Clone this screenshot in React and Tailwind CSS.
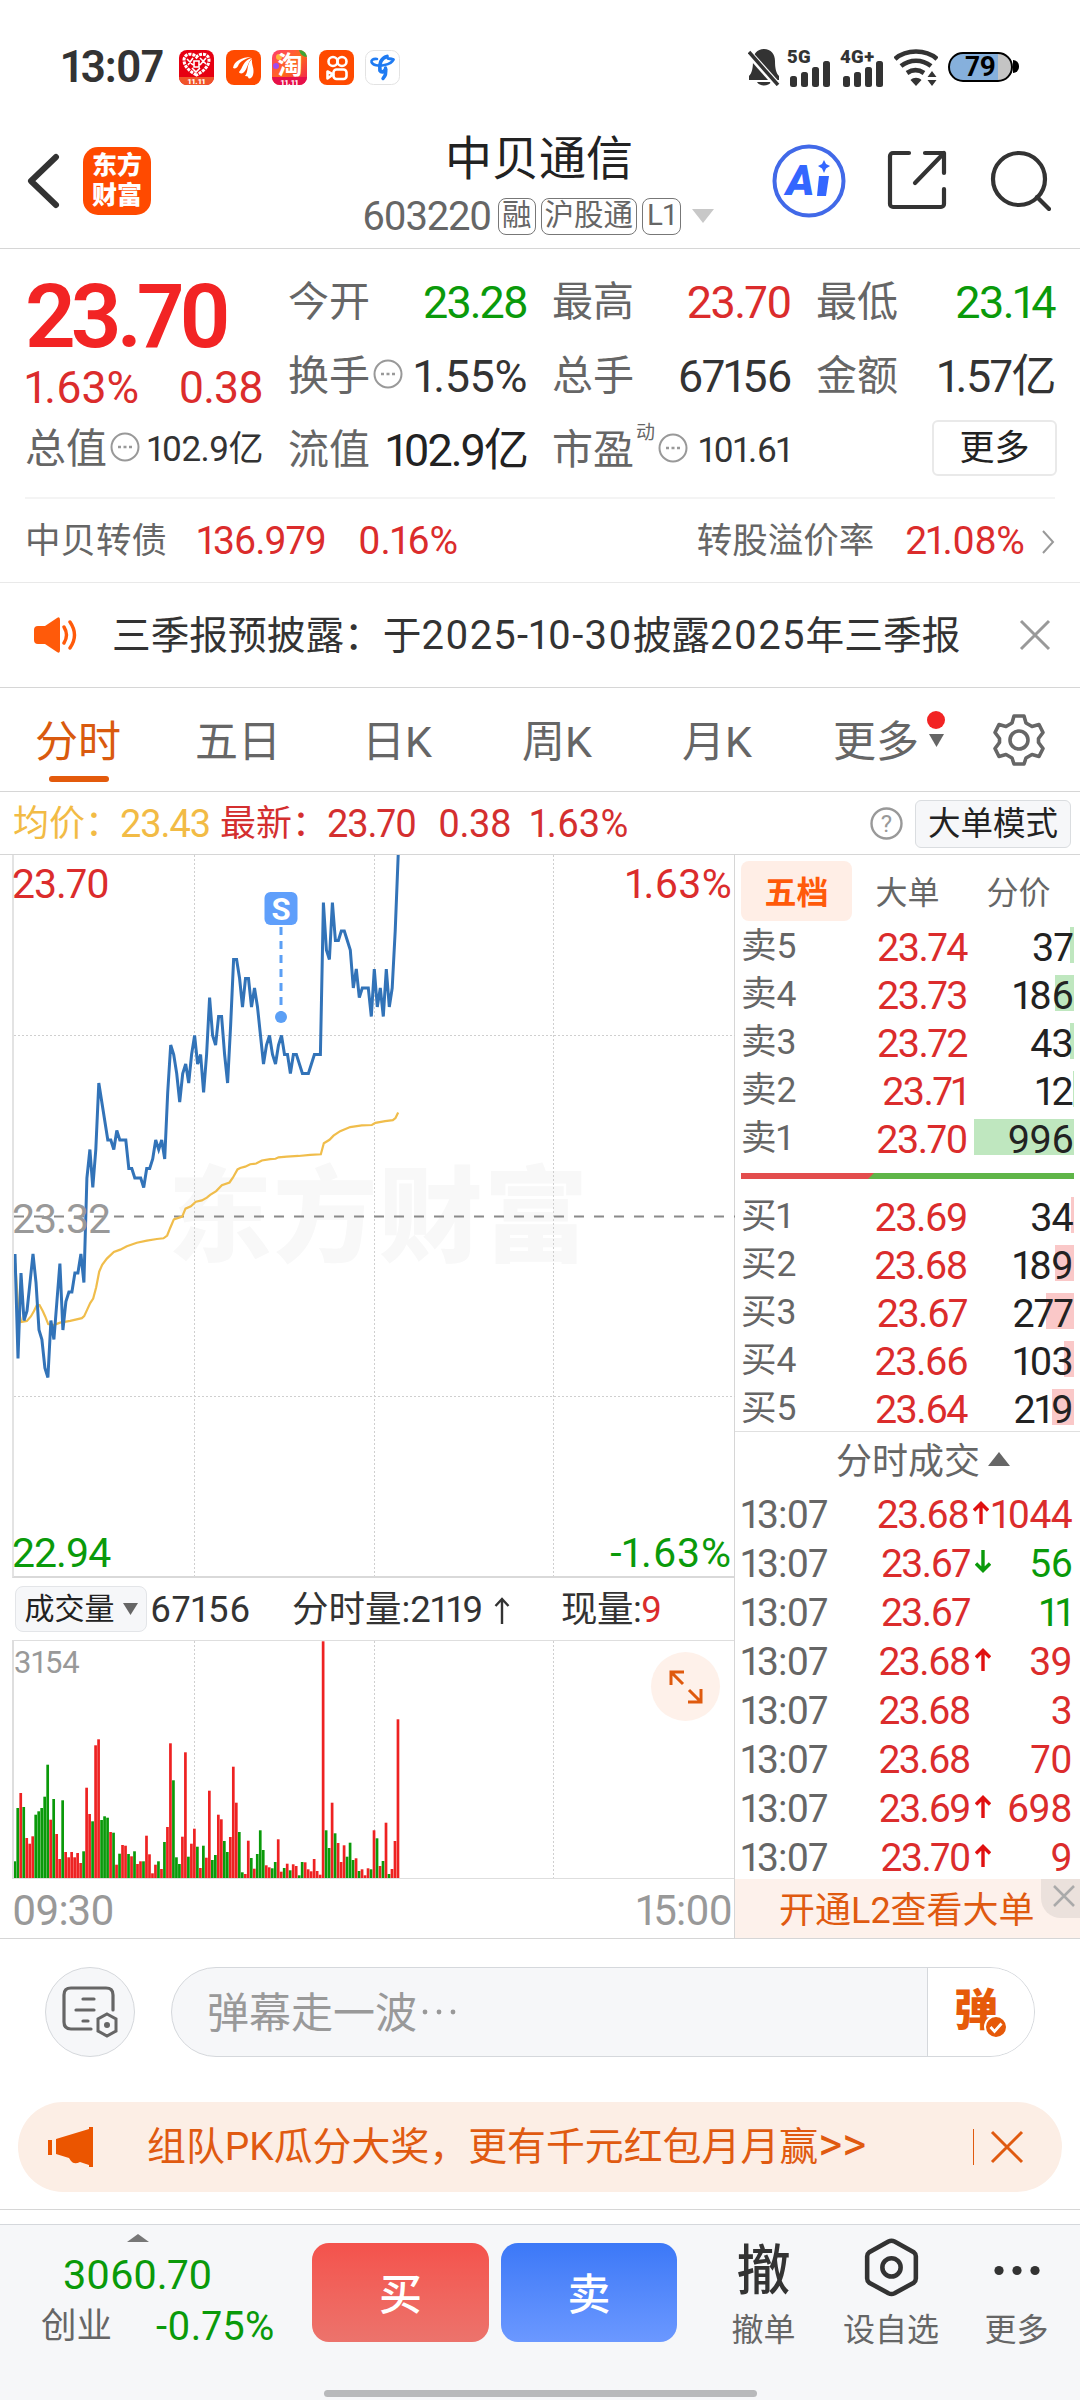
import clsx from 'clsx'

const PREV_CLOSE_STEP = 38
const MINUTE = 2.994

// minute prices, in cents below 23.70
const PRICES = [
  42, 53, 44, 49, 48, 45, 42, 45, 50, 51, 54, 55, 49, 51, 47, 43, 50, 47, 46, 46, 44, 44, 42, 45, 34,
  31, 35, 31, 24, 26, 28, 30, 30, 31, 29, 30, 30, 30, 33, 33, 34, 34, 34, 35, 33, 33, 32, 30, 31, 30,
  32, 25, 20, 21, 23, 26, 23, 22, 24, 21, 19, 22, 21, 25, 21, 15, 19, 20, 17, 17, 21, 24, 18, 11, 11,
  13, 16, 13, 13, 16, 14, 16, 19, 22, 20, 19, 21, 22, 20, 19, 21, 21, 23, 21, 21, 22, 23, 23, 23, 22,
  21, 21, 21, 5, 10, 11, 5, 9, 9, 8, 8, 9, 10, 14, 12, 15, 14, 14, 14, 17, 12, 16, 14, 17, 12, 16, 14,
  8, 0,
]

const AVERAGE =
  '45,1200 54,1330 63,1371 80,1368 92,1355 101,1340 110,1322 118,1322 128,1340 135,1355 144,1377 160,1380 180,1373 210,1368 245,1360 252,1354 262,1333 270,1316 279,1303 288,1270 297,1225 306,1205 320,1187 341,1168 360,1161 380,1151 410,1141 440,1135 470,1130 490,1128 501,1120 510,1098 521,1073 546,1065 556,1042 572,1035 587,1022 605,1018 620,1010 630,1002 648,991 665,974 688,966 698,952 712,928 720,924 735,920 750,913 768,911 785,902 810,898 826,897 835,893 860,891 895,889 930,886 962,884 971,852 988,842 1000,830 1020,817 1050,805 1085,800 1115,799 1126,793 1155,788 1178,785 1186,779 1194,763'

// direction and height for every minute; g = down, r = up
const VOLUMES = `g50 g210 r255 g213 r120 r103 r125 g190 g200 g210 g244 g340 r175 g237 r132 r57 g233 r78 r62 r78
  r62 r75 r45 g80 r271 r192 g170 r398 r416 g174 g185 g181 r138 g136 r40 g73 r99 r97 g72 r65 g80 r42 r50
  g50 r127 r71 r14 r40 g50 r27 g108 r153 r404 g293 g62 g42 r124 r377 g64 r103 r148 g94 r30 g97 r61 r262
  g54 g69 r190 r176 g111 g78 r123 r334 r226 g138 g17 r12 r112 g60 r28 g72 g143 g84 r38 r32 g29 g48 r116
  r19 g30 r43 g23 r41 r36 g8 g48 r47 r26 r20 r57 r21 r10 r710 g143 g90 r226 g134 r105 r48 r98 g64 g106
  g54 r59 g21 r26 r8 r29 g26 r143 g119 r36 g51 r166 g12 r27 r111 r476`
  .split(/\s+/)
  .map((s) => ({ up: s[0] === 'r', h: Number(s.slice(1)) / 3 }))

const ASKS = [
  ['卖5', '23.74', 37],
  ['卖4', '23.73', 186],
  ['卖3', '23.72', 43],
  ['卖2', '23.71', 12],
  ['卖1', '23.70', 996],
]
const BIDS = [
  ['买1', '23.69', 34],
  ['买2', '23.68', 189],
  ['买3', '23.67', 277],
  ['买4', '23.66', 103],
  ['买5', '23.64', 219],
]

const TRADES = [
  ['23.68', 'up', 1044, 'red'],
  ['23.67', 'down', 56, 'green'],
  ['23.67', '', 11, 'green'],
  ['23.68', 'up', 39, 'red'],
  ['23.68', '', 3, 'red'],
  ['23.68', '', 70, 'red'],
  ['23.69', 'up', 698, 'red'],
  ['23.70', 'up', 9, 'red'],
]

function Signal() {
  return (
    <svg width="40" height="26" viewBox="0 0 40 26" fill="#333">
      <rect x="0" y="15" width="7" height="11" rx="2.5" />
      <rect x="11" y="11" width="7" height="15" rx="2.5" />
      <rect x="22" y="6" width="7" height="20" rx="2.5" />
      <rect x="33" y="0" width="7" height="26" rx="2.5" />
    </svg>
  )
}

function StatusBar() {
  return (
    <div className="flex h-[112px] items-center pl-[61px] pr-[61px] pt-[22px]">
      <span className="w-[118px] text-[44px] font-semibold leading-none tracking-[-1px] text-[#333]">13:07</span>
      <div className="flex gap-[11.6px]">
        <svg width="35" height="35" viewBox="0 0 35 35">
          <rect width="35" height="35" rx="8" fill="#e60012" />
          <path d="M0 27h35a8 8 0 0 1-8 8H8a8 8 0 0 1-8-8z" fill="#f0542a" />
          <path d="M17.500 25C10 21 5 16 5 10c0-6 8-8 12.500-3C22 2 30 4 30 10c0 6-5 11-12.500 15z" fill="none" stroke="#fff" strokeWidth="3" strokeDasharray="3 1" />
          <path d="M8 9l6 6M14 8l-5 7M21 8l6 6M27 8l-6 7M13 18l4 4 4-4M15 11h5v6h-5z" fill="none" stroke="#fff" strokeWidth="1.600" />
          <text x="17.500" y="34" fontSize="8" fontWeight="800" fill="#fff" textAnchor="middle">11.11</text>
        </svg>
        <svg width="35" height="35" viewBox="0 0 35 35" fill="#fff">
          <rect width="35" height="35" rx="8" fill="#ff4a00" />
          <path d="M7 18c1-7 9-11 18-11-6 2-11 4-13 9-1 2-3 3-5 2z" />
          <path d="M13 22c4-4 4-12 13-14-5 5-4 11-9 15-2 1-4 0-4-1z" />
          <path d="M19 26c4-5 1-12 7-17-1 5 3 10 1 16-1 3-3 4-5 3 1-1 0-2-3-2z" />
        </svg>
        <svg width="35" height="35" viewBox="0 0 35 35">
          <defs>
            <linearGradient id="tb" x1="0" y1="0" x2="1" y2="1">
              <stop offset="0" stopColor="#ff3c6e" />
              <stop offset="0.500" stopColor="#ff6a1a" />
              <stop offset="1" stopColor="#f01a5a" />
            </linearGradient>
          </defs>
          <rect width="35" height="35" rx="8" fill="url(#tb)" />
          <path d="M27 0a8 8 0 0 1 8 7c-4 0-7-3-8-7z" fill="#3fa535" />
          <circle cx="7" cy="7" r="3" fill="#ffb53a" />
          <circle cx="4" cy="16" r="3" fill="#a04af0" />
          <path d="M0 27h35a8 8 0 0 1-8 8H8a8 8 0 0 1-8-8z" fill="#e6104a" />
          <text x="18" y="24" fontSize="25" fontWeight="700" fill="#fff" textAnchor="middle">淘</text>
          <text x="17.500" y="34.500" fontSize="8" fontWeight="800" fill="#fff" textAnchor="middle">11.11</text>
        </svg>
        <svg width="35" height="35" viewBox="0 0 35 35" fill="none" stroke="#fff" strokeWidth="2.600">
          <rect width="35" height="35" rx="8" fill="#ff4a00" stroke="none" />
          <circle cx="14" cy="11.500" r="4.500" />
          <circle cx="23" cy="11.500" r="4.500" />
          <rect x="14.500" y="19.500" width="13" height="9.500" rx="3" />
          <path d="M14 24.500L8.500 21.500v7z" strokeLinejoin="round" />
        </svg>
        <svg width="35" height="35" viewBox="0 0 35 35" fill="none" stroke="#1f7bf2" strokeLinecap="round">
          <rect x="0.500" y="0.500" width="34" height="34" rx="8" fill="#fff" stroke="#e3e3e3" />
          <path d="M12 9C8 8.500 6 10 6.500 12c1 3 7 4.500 13 3 5-1 8-3 9-5.500" strokeWidth="2.600" />
          <path d="M28 9.500c-2-1-4-.500-5-1" strokeWidth="3" />
          <path d="M22 6.500C16 8 14 14 15 20.500c1.500 2.500 4 1.500 5.500-1" strokeWidth="3.800" />
          <path d="M20.500 18c1 5 0 8-2.500 10.500" strokeWidth="3.400" />
        </svg>
      </div>
      <div className="ml-auto flex items-end">
        <svg className="mr-[10px]" width="32" height="37" viewBox="0 0 32 37">
          <path d="M16 0c7 0 11 5 11 12 0 7 1 12 4 15v4H1v-4c3-3 4-8 4-15C5 5 9 0 16 0zM9 33h14c-2 4.500-12 4.500-14 0z" fill="#333" />
          <path d="M-1 2L31 38" stroke="#fff" strokeWidth="7" />
          <path d="M1 3l29 33" stroke="#333" strokeWidth="3.500" />
        </svg>
        <div className="relative mr-[13px] h-[36px] w-[40px] pt-[11px]">
          <span className="absolute -left-[3px] -top-[2px] text-[18.500px] font-black leading-none tracking-[0.400px] text-[#333]">5G</span>
          <Signal />
        </div>
        <div className="relative mr-[11px] h-[36px] w-[40px] pt-[11px]">
          <span className="absolute -left-[3px] -top-[2px] text-[18.500px] font-black leading-none tracking-[0.400px] text-[#333]">4G+</span>
          <Signal />
        </div>
        <svg className="mr-[10px]" width="44" height="37" viewBox="0 0 44 37" fill="none" stroke="#333" strokeWidth="4.600">
          <path d="M1 10C12 0 32 0 43 10M7 17c9-7 21-7 30 0M13 24c6-4 11-4 17 0" />
          <path d="M16.500 31c3-3 8-3 11 0L22 37zM38 22l4.500 6h-9zM38 37l4.500-6h-9z" fill="#333" stroke="none" />
        </svg>
        <div className="mb-1 flex items-center">
          <div className="flex h-[30px] w-[65px] items-center justify-center rounded-full border-2 border-black bg-linear-to-r from-[#86b0dc] from-78% to-[#c4c4c4] to-78% text-[28px] font-bold leading-none text-black">
            79
          </div>
          <div className="h-[13px] w-[6px] rounded-r-md bg-black" />
        </div>
      </div>
    </div>
  )
}

function Tag({ children }) {
  return (
    <span className="flex h-[37px] shrink-0 items-center whitespace-nowrap rounded-lg border border-[#777] px-[3px] text-[29.500px] leading-none text-[#666]">
      {children}
    </span>
  )
}

function Header() {
  return (
    <header className="flex h-[137px] items-center border-b border-[#d6d6d6] pl-[27px] pr-[29px]">
      <svg className="mt-[2px]" width="33" height="56" viewBox="0 0 33 56" fill="none" stroke="#333" strokeWidth="6" strokeLinecap="round" strokeLinejoin="round">
        <path d="M29 4L4 28l25 24" />
      </svg>
      <div className="ml-[23px] mt-[1px] flex h-[68px] w-[68px] flex-col items-center justify-center rounded-[15px] bg-[#ff4a00] text-[25px] font-black leading-[30px] text-white">
        <span>东方</span>
        <span>财富</span>
      </div>
      <div className="ml-[211px] w-[353px] self-start pt-[17px]">
        <h1 className="pl-[83px] text-[47px] leading-[60px] text-[#222]">中贝通信</h1>
        <div className="flex h-[54px] items-center gap-[5px]">
          <span className="mt-[1px] w-[131px] shrink-0 text-[40px] leading-none tracking-[-1.300px] text-[#666]">603220</span>
          <Tag>融</Tag>
          <Tag>沪股通</Tag>
          <Tag>
            <span className="px-px">L1</span>
          </Tag>
          <svg className="ml-[6px] shrink-0" width="22" height="14" viewBox="0 0 22 14">
            <path d="M0 0h22L11 14z" fill="#c8c8c8" />
          </svg>
        </div>
      </div>
      <svg className="ml-auto mt-[2px] shrink-0" width="74" height="74" viewBox="0 0 74 74">
        <circle cx="37" cy="37" r="34.500" fill="#fff" stroke="#4169e8" strokeWidth="4" />
        <text x="14" y="51" fontSize="43" fontWeight="900" fontStyle="italic" fill="#3366ff">A</text>
        <path d="M47 32h10l-3 20h-9z" fill="#3366ff" />
        <path d="M52 16l2 4 4 2-4 2.500-2 4.500-2-4.500-4-2.500 4-2z" fill="#3366ff" />
      </svg>
      <svg className="ml-[41px]" width="60" height="60" viewBox="0 0 60 60" fill="none" stroke="#333" strokeWidth="4.200" strokeLinecap="round" strokeLinejoin="round">
        <path d="M22 3H6a3 3 0 0 0-3 3v48a3 3 0 0 0 3 3h48a3 3 0 0 0 3-3V39M38 3h19v20M57 3L28 33" />
      </svg>
      <svg className="ml-[43px]" width="61" height="61" viewBox="0 0 61 61" fill="none" stroke="#333" strokeWidth="4.200" strokeLinecap="round">
        <circle cx="29" cy="29" r="26" />
        <path d="M47 47l12 12" />
      </svg>
    </header>
  )
}

function MoreDots() {
  return (
    <svg width="30" height="30" viewBox="0 0 30 30" fill="none" stroke="#999" strokeWidth="2">
      <circle cx="15" cy="15" r="13.500" />
      <path d="M8 15h3M13.500 15h3M19 15h3" strokeWidth="2.600" />
    </svg>
  )
}

function Stat({ label, info, sup, value, className }) {
  return (
    <div className="flex items-center justify-between leading-none">
      <span className="flex items-center text-[41px] text-[#666]">
        {label}
        {sup && <span className="-mt-9 ml-[2px] text-[19px]">{sup}</span>}
        {info && (
          <span className="-mt-[5px] ml-[3px] flex">
            <MoreDots />
          </span>
        )}
      </span>
      <span className={clsx('whitespace-nowrap', className)}>{value}</span>
    </div>
  )
}

const VALUE = 'text-[45px] tracking-[-1.500px]'

function Quote() {
  return (
    <section className="px-[25px]">
      <div className="flex h-[250px] justify-between border-b-2 border-[#f4f4f4] pt-[16px]">
        <div className="flex w-[238px] flex-col">
          <div className="mt-[14px] h-[75px] text-[89px] font-semibold leading-[75px] tracking-[-5px] text-[#f22424]">23.70</div>
          <div className="mt-[10px] flex h-[48px] items-center justify-between text-[44.500px] leading-none text-[#db2c2c]">
            <span>1.63%</span>
            <span className="tracking-[-1px]">0.38</span>
          </div>
          <div className="mt-[16px] h-[46px] pt-px">
            <Stat label="总值" info value="102.9亿" className="text-[35px] tracking-[-0.600px] text-[#333]" />
          </div>
        </div>
        <div className="grid h-[222px] w-[239px] grid-rows-3 items-center">
          <Stat label="今开" value="23.28" className="text-[45px] tracking-[-2px] text-[#0a9a0a]" />
          <Stat label="换手" info value="1.55%" className="text-[45px] tracking-[-0.400px] text-[#333]" />
          <Stat label="流值" value="102.9亿" className="text-[45px] tracking-[-2.100px] text-[#222]" />
        </div>
        <div className="grid h-[222px] w-[239px] grid-rows-3 items-center">
          <Stat label="最高" value="23.70" className={clsx(VALUE, 'text-[#db2c2c]')} />
          <Stat label="总手" value="67156" className="text-[45px] tracking-[-1.200px] text-[#333]" />
          <Stat label="市盈" sup="动" info value="101.61" className="text-[35px] tracking-[-0.500px] text-[#333]" />
        </div>
        <div className="grid h-[222px] w-[239px] grid-rows-3 items-center">
          <Stat label="最低" value="23.14" className={clsx(VALUE, 'text-[#0a9a0a]')} />
          <Stat label="金额" value="1.57亿" className={clsx(VALUE, 'text-[#333]')} />
          <button className="-mr-0.5 -mt-[4px] h-[56px] w-[125px] justify-self-end rounded-md border-2 border-[#e9e9e9] text-[35px] leading-none text-[#222]">
            更多
          </button>
        </div>
      </div>
      <div className="flex h-[83px] items-center pt-[2px] text-[39px] leading-none text-[#db2c2c]">
        <span className="w-[172px] text-[35.500px] text-[#666]">中贝转债</span>
        <span className="w-[161px] tracking-[-1px]">136.979</span>
        <span className="tracking-[-0.200px]">0.16%</span>
        <span className="ml-auto mr-[31px] text-[35.500px] text-[#666]">转股溢价率</span>
        <span className="mr-[18px] tracking-[-0.700px]">21.08%</span>
        <svg width="13" height="24" viewBox="0 0 13 24" fill="none" stroke="#999" strokeWidth="2">
          <path d="M1 1l10 11L1 23" />
        </svg>
      </div>
    </section>
  )
}

function Notice() {
  return (
    <section className="flex h-[106px] items-center border-y border-t-[#e9e9e9] border-b-[#d6d6d6] pl-[33px] pr-[29px]">
      <svg width="46" height="36" viewBox="0 0 46 36" fill="#ff5a0a">
        <path d="M5 9h7L24 1q3-2 3 2v30q0 4-3 2L12 27H5q-4 0-4-4V13q0-4 4-4z" />
        <path d="M31 10q5 8 0 16M37 5q9 13 0 26" fill="none" stroke="#ff5a0a" strokeWidth="3.400" strokeLinecap="round" />
      </svg>
      <span className="ml-[33px] whitespace-nowrap pt-px text-[38.700px] leading-none text-[#333]">
        三季报预披露：于<span className="text-[40px] tracking-[1.200px]">2025-10-30</span>披露
        <span className="text-[40px] tracking-[1.200px]">2025</span>年三季报
      </span>
      <svg className="ml-auto" width="32" height="32" viewBox="0 0 32 32" stroke="#999" strokeWidth="3">
        <path d="M2 2l28 28M30 2L2 30" />
      </svg>
    </section>
  )
}

function Tabs() {
  return (
    <nav className="flex h-[104px] items-center border-b border-[#d6d6d6] pt-[5px] text-[43px] leading-none text-[#666]">
      <div className="relative ml-[35px] w-[160px] text-[#d95a0e]">
        分时
        <span className="absolute -bottom-[18px] left-[14px] h-[6px] w-[60px] rounded-[3px] bg-[#e35a0c]" />
      </div>
      <span className="w-[167px]">五日</span>
      <span className="w-[160px]">日K</span>
      <span className="w-[160px]">周K</span>
      <span className="w-[151px]">月K</span>
      <span className="w-[86px]">更多</span>
      <div className="ml-[8px] flex w-[18px] flex-col items-center gap-[5px] pb-[27px]">
        <span className="h-[18px] w-[18px] rounded-full bg-[#f22424]" />
        <svg width="15" height="13" viewBox="0 0 15 13">
          <path d="M0 0h15L7.500 13z" fill="#666" />
        </svg>
      </div>
      <svg className="mb-[5px] ml-[48px]" width="52" height="52" viewBox="0 0 52 52" fill="none" stroke="#666" strokeWidth="3.600" strokeLinejoin="round">
        <path d="M21 2h10l2 7 6 3.500 7-2 4 8-4.500 6v4l4.500 6-4 8-7-2-6 3.500-2 6H21l-2-6-6-3.500-7 2-4-8 4.500-6v-4L2 18.500l4-8 7 2L19 9z" />
        <circle cx="26" cy="26" r="9" />
      </svg>
    </nav>
  )
}

function PriceBar() {
  return (
    <div className="flex h-[63px] items-center whitespace-nowrap border-b border-[#d6d6d6] pl-[13px] pr-[9px] pt-px text-[38px] leading-none text-[#d42f2f]">
      <span className="w-[107px] text-[36px] text-[#f2bb45]">均价：</span>
      <span className="w-[100px] tracking-[-1.100px] text-[#f2bb45]">23.43</span>
      <span className="w-[107px] text-[36px]">最新：</span>
      <span className="w-[111px] tracking-[-1.100px]">23.70</span>
      <span className="w-[92px] tracking-[-0.600px]">0.38</span>
      <span className="tracking-[0.200px]">1.63%</span>
      <svg className="ml-auto" width="33" height="33" viewBox="0 0 33 33">
        <circle cx="16.500" cy="16.500" r="15" fill="none" stroke="#999" strokeWidth="2.400" />
        <text x="16.500" y="25" fontSize="24" fill="#999" textAnchor="middle">?</text>
      </svg>
      <button className="ml-[12px] flex h-[48px] w-[156px] items-center justify-center rounded-md border border-[#dadde0] bg-[#f6f7f9] pt-[2px] text-[32.500px] text-[#222]">
        大单模式
      </button>
    </div>
  )
}

function Grid({ height, rows = [] }) {
  return (
    <g stroke="#cfcfcf" strokeWidth="1" strokeDasharray="2 2">
      {[180.5, 360.5, 539.5].map((x) => (
        <path key={x} d={`M${x} 0V${height}`} />
      ))}
      {rows.map((y) => (
        <path key={y} d={`M0 ${y}H723`} />
      ))}
    </g>
  )
}

function PriceChart() {
  const line = PRICES.map((p, i) => `${(1 + i * MINUTE).toFixed(1)},${(p * 9.5).toFixed(1)}`).join(' ')
  const mid = PREV_CLOSE_STEP * 9.5 + 0.5
  return (
    <div className="relative h-[723px] border-b-2 border-l-2 border-b-[#d9d9d9] border-l-[#e3e3e3]">
      <svg className="block" width="721" height="721" viewBox="0 0 721 721">
        <text x="154" y="399" fontSize="104" fontWeight="900" fill="#f8f8f8" textLength="420">
          东方财富
        </text>
        <Grid height={721} rows={[180.5, 541.5]} />
        <path d={`M0 ${mid}H723`} stroke="#8a8a8a" strokeWidth="2" strokeDasharray="10 10" />
        <polyline
          points={AVERAGE}
          fill="none"
          stroke="#f0bd4b"
          strokeWidth="2.200"
          vectorEffect="non-scaling-stroke"
          transform="translate(-13.800 -5.200) scale(0.3333 0.3444)"
        />
        <polyline points={line} fill="none" stroke="#3273b8" strokeWidth="3" />
        <path d="M267 72v88" stroke="#5b9ff5" strokeWidth="3" strokeDasharray="8 6" />
        <circle cx="267" cy="162" r="6" fill="#5b9ff5" />
        <rect x="250.500" y="37" width="33" height="33" rx="6" fill="#5f9ffb" />
        <text x="267" y="64.500" fontSize="31" fontWeight="700" fill="#fff" textAnchor="middle">S</text>
      </svg>
      <div className="absolute inset-0 -left-[2px] flex flex-col justify-between pb-[2px] pr-[2px] pt-[9px] text-[41px] leading-none tracking-[-1px]">
        <div className="flex justify-between text-[#db2c2c]">
          <span>23.70</span>
          <span className="tracking-[0.300px]">1.63%</span>
        </div>
        <span className="text-[#999]">23.32</span>
        <div className="flex justify-between text-[#0a9a0a]">
          <span>22.94</span>
          <span className="tracking-[0.900px]">-1.63%</span>
        </div>
      </div>
    </div>
  )
}

function VolumeChart() {
  return (
    <>
      <div className="flex h-[62px] items-center pl-[3px] pt-[2px] text-[36.500px] leading-none text-[#333]">
        <button className="-mt-[2px] flex h-[46px] w-[132px] items-center justify-center gap-[8px] rounded-lg border border-[#e3e5e8] bg-[#f6f7f9] text-[30px] text-[#222]">
          成交量
          <svg width="15" height="12" viewBox="0 0 15 12">
            <path d="M0 0h15L7.500 12z" fill="#666" />
          </svg>
        </button>
        <span className="ml-[3px] w-[142px] tracking-[0.800px]">67156</span>
        <span className="w-[198px] whitespace-nowrap">分时量:2119</span>
        <svg className="ml-[4px] mr-[51px]" width="16" height="27" viewBox="0 0 16 27" fill="none" stroke="#333" strokeWidth="2.400">
          <path d="M8 27V2M1.500 9L8 2l6.500 7" />
        </svg>
        <span className="tracking-[-0.500px]">现量:</span>
        <span className="text-[#db2c2c]">9</span>
      </div>
      <div className="relative h-[239px] border-y border-l-2 border-[#dedede]">
        <svg className="block" width="721" height="237" viewBox="0 0 721 237">
          <Grid height={237} />
          {VOLUMES.map((v, i) => (
            <rect
              key={i}
              x={(-0.6 + i * MINUTE).toFixed(2)}
              y={(237 - v.h).toFixed(1)}
              width="2.700"
              height={v.h.toFixed(1)}
              fill={v.up ? '#ee2222' : '#0a9a0a'}
            />
          ))}
        </svg>
        <span className="absolute left-0 top-[6px] text-[31px] leading-none text-[#999]">3154</span>
        <div className="absolute right-[14px] top-[11px] flex h-[69px] w-[69px] items-center justify-center rounded-full bg-[#fef1ea]">
          <svg width="34" height="34" viewBox="0 0 34 34" fill="none" stroke="#df5a0e" strokeWidth="3">
            <path d="M2 15V2h13M2 2l12 12M32 19v13H19M32 32L20 20" />
          </svg>
        </div>
      </div>
      <div className="flex h-[59px] items-center justify-between pr-[2px] pt-[4px] text-[42px] leading-none tracking-[-1px] text-[#999]">
        <span>09:30</span>
        <span>15:00</span>
      </div>
    </>
  )
}

function Level({ label, price, volume, side }) {
  return (
    <div className="relative flex h-[48px] items-center leading-none">
      <span
        className={clsx('absolute right-0 top-[4px] h-[36px]', side === 'ask' ? 'bg-[#bfe7bf]' : 'bg-[#fac8c8]')}
        style={{ width: Math.max(1, Math.round(volume / 9.96)) }}
      />
      <span className="relative w-[60px] whitespace-nowrap text-[35.500px] text-[#666]">{label}</span>
      <span className="relative w-[166px] pt-px text-right text-[39.500px] tracking-[-1.500px] text-[#db2c2c]">{price}</span>
      <span className="relative ml-auto pt-px pr-px text-right text-[39.500px] tracking-[-0.800px] text-[#222]">{volume}</span>
    </div>
  )
}

function TradeArrow({ dir }) {
  return (
    <svg
      className={clsx('mb-[5px] ml-[5px] mr-[2px] shrink-0', dir === 'down' && 'rotate-180')}
      width="16"
      height="23"
      viewBox="0 0 16 23"
      fill="none"
      stroke={dir === 'down' ? '#0a9a0a' : '#e01010'}
      strokeWidth="3.400"
    >
      {dir && <path d="M8 23V3M1 9.500L8 2.500l7 7" />}
    </svg>
  )
}

function OrderBook() {
  return (
    <aside className="flex h-[1083px] w-[346px] flex-col border-l border-[#d6d6d6]">
      <div className="flex h-[68px] shrink-0 pl-[6px] pt-[6px] text-[32px] leading-none text-[#666]">
        <span className="flex h-[60px] w-[111px] items-center justify-center rounded-lg bg-[#ffeee6] pt-[3px] font-bold text-[#ff5a0a]">五档</span>
        <span className="flex h-[60px] w-[111px] items-center justify-center pt-[3px]">大单</span>
        <span className="flex h-[60px] w-[111px] items-center justify-center pt-[3px]">分价</span>
      </div>
      <div className="shrink-0 pl-[6px] pr-[6px]">
        {ASKS.map(([label, price, volume]) => (
          <Level key={label} label={label} price={price} volume={volume} side="ask" />
        ))}
        <svg className="mb-[14px] mt-[10px] block" width="333" height="6" viewBox="0 0 333 6">
          <path d="M0 0h333v6H0z" fill="#5fb548" />
          <path d="M0 0h133l-6 6H0z" fill="#e34d4d" />
        </svg>
        {BIDS.map(([label, price, volume]) => (
          <Level key={label} label={label} price={price} volume={volume} side="bid" />
        ))}
      </div>
      <div className="-mt-[2px] flex h-[58px] shrink-0 items-center border-t border-[#e0e0e0] pl-[101px] pt-[2px] text-[36px] leading-none text-[#666]">
        分时成交
        <svg className="mb-[6px] ml-[8px]" width="22" height="14" viewBox="0 0 22 14">
          <path d="M0 14h22L11 0z" fill="#666" />
        </svg>
      </div>
      <div className="shrink-0 pl-[6px] pr-[8px]">
        {TRADES.map(([price, dir, volume, color], i) => (
          <div key={i} className="flex h-[49px] items-center pt-[3px] text-[39px] leading-none tracking-[-1.500px] text-[#db2c2c]">
            <span className="w-[110px] tracking-[-0.900px] text-[#666]">13:07</span>
            <span className="w-[119px] text-right">{price}</span>
            <TradeArrow dir={dir} />
            <span className={clsx('flex-1 text-right tracking-[-0.700px]', color === 'green' && 'text-[#0a9a0a]')}>{volume}</span>
          </div>
        ))}
      </div>
      <div className="relative -mt-[2px] flex h-[59px] shrink-0 items-center bg-[#fdf1eb] pl-[44px] pt-[4px] text-[36px] leading-none text-[#e05a10]">
        开通L2查看大单
        <div className="absolute right-0 top-0 flex h-[39px] w-[39px] items-center justify-center rounded-bl-[20px] bg-[#ebe1dc] pb-[6px] pl-[6px]">
          <svg width="22" height="22" viewBox="0 0 22 22" stroke="#aaa" strokeWidth="2.500">
            <path d="M1 1l20 20M21 1L1 21" />
          </svg>
        </div>
      </div>
    </aside>
  )
}

function Hexagon({ size, stroke }) {
  return (
    <svg width={size} height={size * 1.07} viewBox="0 0 54 58" fill="none" strokeLinejoin="round" stroke={stroke} strokeWidth="4.500">
      <path d="M24 3.500Q27 2 30 3.500L49 14q2 1.500 2 4v22q0 2.500-2 4L30 54.500Q27 56 24 54.500L5 44q-2-1.500-2-4V18q0-2.500 2-4z" />
      <circle cx="27" cy="29" r="9" />
    </svg>
  )
}

function CommentBar() {
  return (
    <div className="flex h-[147px] items-center border-t border-[#d6d6d6] pl-[45px] pr-[45px]">
      <div className="flex h-[90px] w-[90px] items-center justify-center rounded-full border border-[#d5d8dc] bg-[#f6f7f9]">
        <svg width="56" height="52" viewBox="0 0 56 52" fill="none" stroke="#666" strokeWidth="3.200" strokeLinecap="round">
          <path d="M51 24V9q0-7-7-7H9Q2 2 2 9v27q0 7 7 7h20M21 13h11M14 24h18M21 35h5" />
          <path d="M45 28l9 5v12l-9 5-9-5V33z" fill="#f6f7f9" strokeWidth="3" />
          <circle cx="45" cy="39" r="3" fill="#666" stroke="none" />
        </svg>
      </div>
      <div className="ml-[36px] flex h-[90px] flex-1 overflow-hidden rounded-full border border-[#d5d8dc] bg-[#f6f7f9]">
        <div className="flex flex-1 items-center border-r border-[#d5d8dc] pl-[35px] pt-[4px] text-[42px] leading-none text-[#999]">
          弹幕走一波
          <svg className="mb-[5px] ml-[5px]" width="34" height="6" viewBox="0 0 34 6" fill="#999">
            <circle cx="3" cy="3" r="2.400" />
            <circle cx="17" cy="3" r="2.400" />
            <circle cx="31" cy="3" r="2.400" />
          </svg>
        </div>
        <div className="flex w-[106px] items-center bg-white pl-[26px] text-[44px] font-black leading-none text-[#e65a0a]">
          <span className="relative pb-0.5">
            弹
            <svg className="absolute -right-[10px] -bottom-[4px]" width="24" height="24" viewBox="0 0 24 24" fill="none" stroke="#fff">
              <circle cx="12" cy="12" r="11" fill="#e65a0a" strokeWidth="2" />
              <path d="M6.500 12l4 4.500 7-8" strokeWidth="2.800" />
            </svg>
          </span>
        </div>
      </div>
    </div>
  )
}

function Promo() {
  return (
    <div className="mx-[18px] mt-[17px] flex h-[90px] items-center rounded-full bg-[#fceee5] pl-[30px] pr-[38px] text-[#e05a10]">
      <svg width="46" height="40" viewBox="0 0 46 40" fill="#eb5500">
        <path d="M0 13h4v15H0zM8 12L41 2V0h4v40h-4v-2l-9-3q-6 3-9-1l-2-3-13-4z" />
      </svg>
      <span className="ml-[53px] whitespace-nowrap text-[38.900px] leading-none">
        组队PK瓜分大奖，更有千元红包月月赢<span className="text-[46px] leading-[30px]">&gt;&gt;</span>
      </span>
      <span className="ml-auto h-[36px] w-[1.500px] bg-[#e05a10]" />
      <svg className="ml-[16px]" width="34" height="34" viewBox="0 0 34 34" stroke="#e05a10" strokeWidth="3">
        <path d="M2 2l30 30M32 2L2 32" />
      </svg>
    </div>
  )
}

function BottomBar() {
  return (
    <footer className="mt-[14px] flex h-[176px] flex-col border-t border-[#d5d8dc] bg-[#f6f7f9]">
      <div className="flex h-[165px]">
        <div className="flex w-[312px] flex-col leading-none text-[#0a9a0a]">
          <svg className="ml-[127px] mt-[9px]" width="22" height="8" viewBox="0 0 22 8">
            <path d="M0 8h22L11 0z" fill="#777" />
          </svg>
          <span className="ml-[63px] mt-[12px] text-[41.500px] tracking-[-0.400px]">3060.70</span>
          <div className="mt-[8px] flex items-center pl-[41px]">
            <span className="w-[115px] pt-[3px] text-[35.500px] text-[#666]">创业</span>
            <span className="pt-[3px] text-[40px] tracking-[0.200px]">-0.75%</span>
          </div>
        </div>
        <button className="mt-[18px] h-[99px] w-[177px] rounded-[17px] bg-linear-to-b from-[#f4524c] to-[#ec736c] pt-[5px] text-[43px] font-medium text-white">
          买
        </button>
        <button className="ml-[12px] mt-[18px] h-[99px] w-[176px] rounded-[17px] bg-linear-to-b from-[#3c78f7] to-[#6b98ff] pt-[5px] text-[43px] font-medium text-white">
          卖
        </button>
        <div className="ml-[37px] flex w-[99px] flex-col items-center pt-[13px] leading-none">
          <span className="h-[76px] pt-[3px] text-[54px] font-medium leading-[62px] text-[#333]">撤</span>
          <span className="text-[32px] text-[#666]">撤单</span>
        </div>
        <div className="ml-[29px] flex w-[98px] flex-col items-center pt-[13px] leading-none">
          <div className="h-[76px]">
            <Hexagon size={55} stroke="#333" />
          </div>
          <span className="text-[32px] text-[#666]">设自选</span>
        </div>
        <div className="ml-[30px] flex w-[93px] flex-col items-center pt-[13px] leading-none">
          <svg className="h-[76px] pb-[12px]" width="46" height="75" viewBox="0 0 46 63" fill="#333">
            <circle cx="5" cy="32" r="4.600" />
            <circle cx="23" cy="32" r="4.600" />
            <circle cx="41" cy="32" r="4.600" />
          </svg>
          <span className="text-[32px] text-[#666]">更多</span>
        </div>
      </div>
      <div className="mx-auto h-[7px] w-[433px] rounded-full bg-[#b8b9bb]" />
    </footer>
  )
}

export default function App() {
  return (
    <div className="flex h-[2400px] w-[1080px] flex-col overflow-hidden bg-white font-['Roboto','Noto_Sans_CJK_SC',sans-serif] proportional-nums">
      <StatusBar />
      <Header />
      <Quote />
      <Notice />
      <Tabs />
      <PriceBar />
      <main className="flex">
        <div className="ml-[12px] w-[722px]">
          <PriceChart />
          <VolumeChart />
        </div>
        <OrderBook />
      </main>
      <CommentBar />
      <Promo />
      <div className="mt-[17px] h-px shrink-0 bg-[#d6d6d6]" />
      <BottomBar />
    </div>
  )
}
